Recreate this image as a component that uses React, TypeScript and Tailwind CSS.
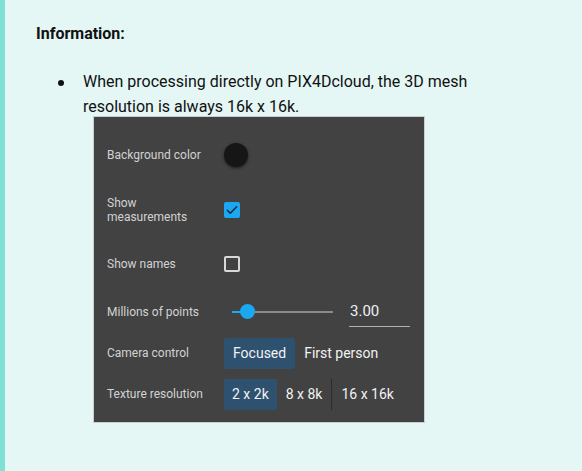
import React from "react";

export default function App() {
  const font = { fontFamily: "Roboto, 'Noto Sans', sans-serif" };
  return (
    <div
      className="w-[582px] h-[471px] bg-[#e4f7f5] border-l-[5px] border-[#7fe0d4] overflow-hidden text-[#111]"
      style={font}
    >
      <div className="pl-[31px] pt-[23px]">
        <div className="text-[16px] font-bold leading-[22px] text-[#111]">Information:</div>
        <div className="mt-[24px] flex">
          <div className="w-[47px] flex justify-end pr-[19px] pt-[11px]">
            <div className="w-[6px] h-[6px] rounded-full bg-[#111]" />
          </div>
          <div className="text-[16px] leading-[25px] text-[#111]">
            <div>When processing directly on PIX4Dcloud, the 3D mesh</div>
            <div>resolution is always 16k x 16k.</div>
          </div>
        </div>
        <div className="ml-[57px] mt-[-3px] w-[332px] h-[307px] bg-[#424242] border border-[#c9cfcf] pl-[13px] pt-[14px]">
          {/* Background color */}
          <div className="flex items-center h-[48px]">
            <div className="w-[117px] text-[12px] leading-[14px] text-[#d2d2d2]">Background color</div>
            <div className="w-[24px] h-[24px] rounded-full bg-[#161616] shadow-[0_1px_3px_rgba(0,0,0,0.6)]" />
          </div>
          {/* Show measurements */}
          <div className="flex items-center h-[62px]">
            <div className="w-[117px] text-[12px] leading-[14px] text-[#d2d2d2]">
              Show
              <br />
              measurements
            </div>
            <div className="w-[16px] h-[16px] rounded-[2px] bg-[#1aa8f2] flex items-center justify-center">
              <svg width="14" height="14" viewBox="0 0 24 24" fill="none">
                <path d="M4 12.5l5 5L20 6.5" stroke="#1b2430" strokeWidth="2.6" strokeLinecap="round" strokeLinejoin="round" />
              </svg>
            </div>
          </div>
          {/* Show names */}
          <div className="flex items-center h-[46px]">
            <div className="w-[117px] text-[12px] leading-[14px] text-[#d2d2d2]">Show names</div>
            <div className="w-[16px] h-[16px] rounded-[2px] border-2 border-[#d8d8d8]" />
          </div>
          {/* Millions of points */}
          <div className="flex items-center h-[50px]">
            <div className="w-[117px] text-[12px] leading-[14px] text-[#d2d2d2]">Millions of points</div>
            <div className="relative w-[109px] h-[16px] flex items-center">
              <div className="ml-[8px] w-[101px] h-[2px] bg-[#8a8a8a]" />
              <div className="absolute left-[8px] top-[7px] w-[15px] h-[2px] bg-[#1aa8f2]" />
              <div className="absolute left-[16px] top-[0px] w-[15px] h-[15px] rounded-full bg-[#1aa8f2]" />
            </div>
            <div className="ml-[16px] w-[61px] h-[30px] flex flex-col justify-end">
              <div className="text-[15px] leading-[20px] text-[#f0f0f0] pl-[1px]">3.00</div>
              <div className="mt-[5px] h-[1px] bg-[#b0b0b0]" />
            </div>
          </div>
          {/* Camera control */}
          <div className="flex items-center h-[32px]">
            <div className="w-[117px] text-[12px] leading-[14px] text-[#d2d2d2]">Camera control</div>
            <div className="flex h-[31px] text-[14px] text-[#f2f2f2]">
              <div className="px-[9px] flex items-center bg-[#2f5170] rounded-[2px]">Focused</div>
              <div className="px-[9px] flex items-center">First person</div>
            </div>
          </div>
          {/* Texture resolution */}
          <div className="flex items-center h-[32px] mt-[9px]">
            <div className="w-[117px] text-[12px] leading-[14px] text-[#d2d2d2]">Texture resolution</div>
            <div className="flex h-[31px] text-[14px] text-[#f2f2f2]">
              <div className="px-[8px] flex items-center bg-[#2f5170] rounded-[2px]">2 x 2k</div>
              <div className="px-[9px] flex items-center border-r border-[#2c2c2c]">8 x 8k</div>
              <div className="px-[9px] flex items-center">16 x 16k</div>
            </div>
          </div>
        </div>
      </div>
    </div>
  );
}
